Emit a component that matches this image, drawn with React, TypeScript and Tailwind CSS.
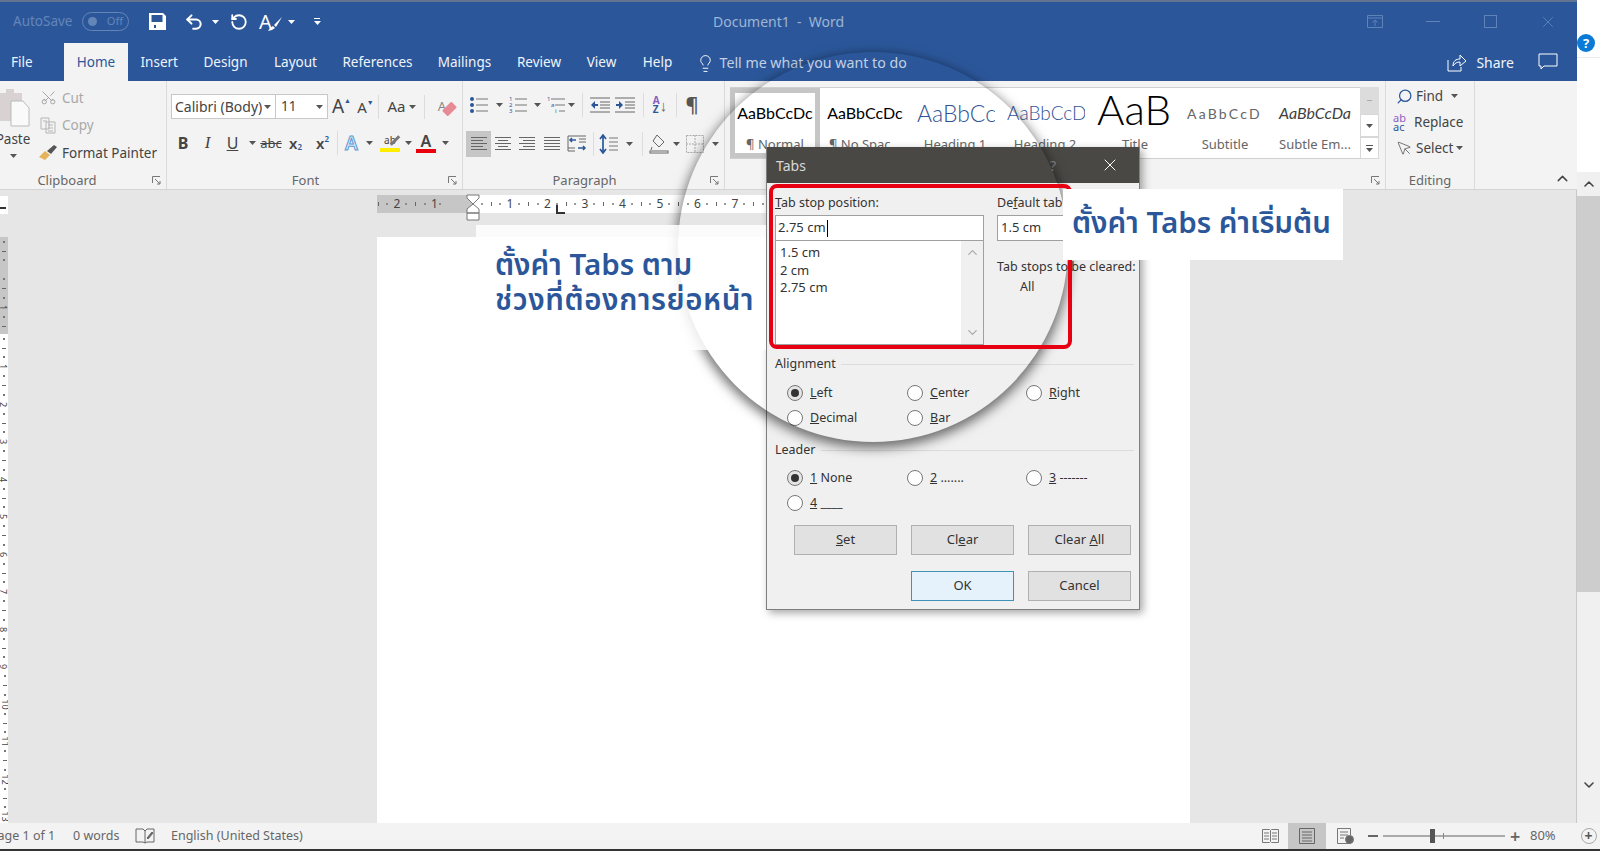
import { Undo2, RotateCcw, Scissors, Lightbulb, Search, MousePointer, ChevronUp, ChevronDown, X } from "lucide-react";
import type { ReactNode } from "react";

const ui = "font-['Noto_Sans',sans-serif]";

function Cell({ className = "", children }: { className?: string; children?: ReactNode }) {
  return <div className={`flex shrink-0 items-center justify-center ${className}`}>{children}</div>;
}

function Caret({ className = "text-[#555]" }: { className?: string }) {
  return (
    <svg width="7" height="4" viewBox="0 0 7 4" className={className}>
      <path d="M0 0h7L3.5 4z" fill="currentColor" />
    </svg>
  );
}

function Launcher() {
  return (
    <svg width="9" height="9" viewBox="0 0 9 9" fill="none" stroke="#777">
      <path d="M.5 7V.5H8" />
      <path d="M3 3l5 5M8 5v3H5" />
    </svg>
  );
}

function Sep() {
  return <div className="h-[24px] w-px shrink-0 bg-[#dcdcdc]" />;
}

// rows of [x1, x2] in a 20 wide box
function Lines({ rows, color = "#666" }: { rows: number[][]; color?: string }) {
  return (
    <svg width="20" height="20" viewBox="0 0 20 20" stroke={color} strokeWidth="1">
      {rows.map(([a, b], i) => (
        <line key={i} x1={a} x2={b} y1={3.5 + i * 3} y2={3.5 + i * 3} />
      ))}
    </svg>
  );
}

function Bullets() {
  return (
    <svg width="20" height="18" viewBox="0 0 20 18">
      {[3, 9, 15].map((y) => (
        <g key={y}>
          <circle cx="3" cy={y} r="2" fill="#2b579a" />
          <line x1="7" x2="19" y1={y} y2={y} stroke="#777" />
        </g>
      ))}
    </svg>
  );
}

function Numbered({ small }: { small?: boolean }) {
  return (
    <svg width="20" height="18" viewBox="0 0 20 18" fontSize="6" fill="#2b579a" fontFamily="Noto Sans">
      <text x="1" y="5">1</text>
      <text x={small ? 5 : 1} y="11">{small ? "a" : "2"}</text>
      <text x={small ? 9 : 1} y="17">{small ? "i" : "3"}</text>
      <line x1={small ? 5 : 7} x2="19" y1="3" y2="3" stroke="#777" />
      <line x1={small ? 9 : 7} x2="19" y1="9" y2="9" stroke="#777" />
      <line x1={small ? 13 : 7} x2="19" y1="15" y2="15" stroke="#777" />
    </svg>
  );
}

function Indent({ right }: { right?: boolean }) {
  return (
    <svg width="20" height="18" viewBox="0 0 20 18">
      {[2, 16].map((y) => (
        <line key={y} x1="0" x2="20" y1={y} y2={y} stroke="#666" />
      ))}
      {[6, 9, 12].map((y) => (
        <line key={y} x1="10" x2="20" y1={y} y2={y} stroke="#666" />
      ))}
      <path d={right ? "M1 8h3V5l4 4-4 4v-3H1z" : "M8 8H5V5L1 9l4 4v-3h3z"} fill="#2b579a" />
    </svg>
  );
}

function Tick({ h = 3 }: { h?: number }) {
  return h === 3 ? <span className="h-[4px] w-px bg-[#666]" /> : <span className="h-[2px] w-[2px] rounded-full bg-[#777]" />;
}

function RulerUnit({ n, className = "" }: { n: string; className?: string }) {
  return (
    <div className={`grid h-full w-[37.5px] shrink-0 grid-cols-4 items-center justify-items-center ${className}`}>
      <Tick h={1} />
      <Tick />
      <Tick h={1} />
      <span className="text-[12px] leading-none text-[#444]">{n}</span>
    </div>
  );
}

function VRulerUnit({ n }: { n: string }) {
  return (
    <div className="grid h-[37.5px] shrink-0 grid-rows-4 items-center justify-items-center">
      <span className="h-[2px] w-[2px] bg-[#777]" />
      <span className="h-px w-[4px] bg-[#666]" />
      <span className="h-[2px] w-[2px] bg-[#777]" />
      <span className="rotate-90 text-[9px] leading-none text-[#444]">{n}</span>
    </div>
  );
}

function Style({ sample, label, className, selected }: { sample: string; label: string; className: string; selected?: boolean }) {
  return (
    <div className={`flex w-[90px] shrink-0 flex-col items-center overflow-hidden ${selected ? "border-[5px] border-[#c6c6c6]" : "border-[5px] border-white"}`}>
      <div className={`flex h-[40px] w-full items-center overflow-hidden whitespace-nowrap font-['Lato',sans-serif] ${className}`}>{sample}</div>
      <div className="whitespace-nowrap pt-[2px] text-[13px] leading-[18px] text-[#666]">{label}</div>
    </div>
  );
}

function Radio({ label, checked }: { label: ReactNode; checked?: boolean }) {
  return (
    <div className="flex items-center gap-[7px] text-[12.5px] leading-none text-[#333]">
      <span className={`flex h-[16px] w-[16px] shrink-0 items-center justify-center rounded-full border border-[#777] ${checked ? "bg-[#e4e4e4]" : "bg-white"}`}>
        {checked && <span className="h-[8px] w-[8px] rounded-full bg-[#333]" />}
      </span>
      <span className="whitespace-nowrap">{label}</span>
    </div>
  );
}

function DialogBtn({ children, primary, className = "" }: { children: ReactNode; primary?: boolean; className?: string }) {
  return (
    <div className={`flex h-[30px] w-[103px] items-center justify-center border text-[13px] text-[#333] ${primary ? "border-[#3f93b8] bg-[#e5f1fb]" : "border-[#b0b0b0] bg-[#e1e1e1]"} ${className}`}>
      <span className="whitespace-pre">{children}</span>
    </div>
  );
}

function Group({ label, launcher, labelClass = "", className, children }: { label?: string; launcher?: boolean; labelClass?: string; className: string; children: ReactNode }) {
  return (
    <div className={`flex h-full shrink-0 flex-col border-r border-[#dadada] ${className}`}>
      <div className="h-[90px] overflow-visible">{children}</div>
      <div className="grid h-[18px] grid-cols-[1fr_auto_1fr] items-center text-[13px] text-[#666]">
        <span />
        <span className={labelClass}>{label}</span>
        <span className="flex justify-end pr-[5px]">{launcher && <Launcher />}</span>
      </div>
    </div>
  );
}

const TABS = [
  { t: "Insert", w: "w-[62.5px]" },
  { t: "Design", w: "w-[70px]" },
  { t: "Layout", w: "w-[70px]" },
  { t: "References", w: "w-[94px]" },
  { t: "Mailings", w: "w-[80px]" },
  { t: "Review", w: "w-[69px]" },
  { t: "View", w: "w-[56px]" },
  { t: "Help", w: "w-[56px]" },
];

const VRULER = ["", "1", "", "1", "2", "3", "4", "5", "6", "7", "8", "9", "10", "11", "12", "13"];

export default function App() {
  return (
    <div className={`relative flex h-[851px] w-[1600px] flex-col overflow-hidden bg-white text-[#444] ${ui}`}>
      <div className="flex min-h-0 flex-1">
        <div className="flex w-[1577px] shrink-0 flex-col">
          {/* title bar */}
          <div className="h-[2px] bg-[#62748f]" />
          <div className="flex h-[39px] items-center bg-[#2b579a] pl-[13px] text-white">
            <span className="w-[63px] text-[13.5px] text-[#6485b8]">AutoSave</span>
            <div className="ml-[6px] flex h-[19px] w-[47px] items-center justify-between rounded-full border border-[#6485b8] px-[5px] text-[11px] text-[#6485b8]">
              <span className="h-[9px] w-[9px] rounded-full bg-[#6485b8]" />
              <span>Off</span>
            </div>
            <svg className="ml-[20px]" width="17" height="17" viewBox="0 0 17 17" fill="#fff">
              <path fillRule="evenodd" d="M0 0h14l3 3v14H0zM2.5 2v7h11V2zM5 12v3h2v-3z" />
            </svg>
            <Undo2 className="ml-[18px]" size={20} strokeWidth={2.4} />
            <Cell className="ml-[7px] w-[8px]"><Caret className="text-white" /></Cell>
            <RotateCcw className="ml-[11px]" size={18} strokeWidth={2.4} />
            <div className="relative ml-[11px] flex h-[24px] w-[24px] items-center text-[20px] leading-none text-white">
              A
              <svg className="absolute left-[9px] top-[7px]" width="15" height="15" viewBox="0 0 15 15" fill="#fff">
                <path d="M14 0L6 8l2 2zM5 9l-3 2-2 3 4-1 3-2z" />
              </svg>
            </div>
            <Cell className="ml-[4px] w-[8px]"><Caret className="text-white" /></Cell>
            <div className="ml-[17px] flex w-[10px] flex-col items-center gap-[2px]">
              <span className="h-px w-[6px] bg-white" />
              <Caret className="text-white" />
            </div>
            <span className="ml-[391px] whitespace-nowrap text-[14px] text-[#9fb4d4]">Document1&nbsp; -&nbsp; Word</span>
            <div className="ml-auto flex text-[#5f82b8]">
              <Cell className="w-[57.75px]">
                <svg width="16" height="13" viewBox="0 0 16 13" fill="none" stroke="currentColor"><path d="M.5.5h15v12H.5zM.5 3h15M8 11V5M5.5 7.5L8 5l2.5 2.5" /></svg>
              </Cell>
              <Cell className="w-[57.75px]"><span className="h-px w-[14px] bg-current" /></Cell>
              <Cell className="w-[57.75px]"><span className="h-[13px] w-[13px] border border-current" /></Cell>
              <Cell className="w-[57.75px]"><X size={18} strokeWidth={1.2} /></Cell>
            </div>
          </div>

          {/* tabs */}
          <div className="flex h-[40px] items-end bg-[#2b579a] text-[13.5px] text-[#f0f4fa]">
            <div className="flex h-[38px] w-[64px] items-center pl-[11px]">File</div>
            <div className="flex h-[38px] w-[64px] items-center justify-center bg-[#f3f3f3] text-[#2b579a]">Home</div>
            {TABS.map((tab) => (
              <div key={tab.t} className={`flex h-[38px] items-center justify-center ${tab.w}`}>{tab.t}</div>
            ))}
            <div className="flex h-[38px] items-center pl-[10px] pt-[2px] text-[#c3d0e4]">
              <Lightbulb size={19} strokeWidth={1.2} className="text-white" />
              <span className="ml-[5px] whitespace-nowrap text-[14.2px]">Tell me what you want to do</span>
            </div>
            <div className="ml-auto flex h-[38px] items-center pr-[19px]">
              <svg width="20" height="19" viewBox="0 0 20 19" fill="none" stroke="#fff">
                <path d="M1 7v11h13v-4M6 13c0-5 3-7 7-7V2l6 6-6 5V9c-3 0-5 1-7 4z" />
              </svg>
              <span className="ml-[9px] text-[14px]">Share</span>
              <svg className="ml-[24px]" width="20" height="18" viewBox="0 0 20 18" fill="none" stroke="#fff">
                <path d="M1 1h18v12H6l-3 3v-3H1z" />
              </svg>
            </div>
          </div>

          {/* ribbon */}
          <div className="flex h-[109px] shrink-0 border-b border-[#d4d4d4] bg-[#f3f3f3]">
            <Group label="Clipboard" labelClass="mr-[32px]" launcher className="w-[167px]">
              <div className="flex h-full">
                <div className="flex w-[26px] flex-col items-center pt-[8px]">
                  <svg className="shrink-0" width="34" height="38" viewBox="0 0 34 38">
                    <path d="M0 4h10V0h8v4h8v28H0z" fill="#d8d2d2" />
                    <path d="M15 12h12l6 7v18H15z" fill="#fafafa" stroke="#bbb" />
                  </svg>
                  <span className="mt-[3px] text-[13.5px] leading-[18px]">Paste</span>
                  <Cell className="mt-[4px] h-[8px]"><Caret /></Cell>
                </div>
                <div className="ml-[12px] flex flex-col pt-[3px] text-[13.5px]">
                  <div className="flex h-[27.5px] items-center text-[#a9a9a9]">
                    <Cell className="w-[20px]"><Scissors size={17} strokeWidth={1.2} className="-rotate-90 text-[#999]" /></Cell>
                    <span className="ml-[4px]">Cut</span>
                  </div>
                  <div className="flex h-[27.5px] items-center text-[#a9a9a9]">
                    <Cell className="w-[20px]">
                      <svg width="16" height="17" viewBox="0 0 16 17" fill="none" stroke="#b5b5b5"><path d="M1 1h8v11H1zM6 5h9v11H6zM3 4h4M8 8h5M8 11h5M8 14h5" /></svg>
                    </Cell>
                    <span className="ml-[4px]">Copy</span>
                  </div>
                  <div className="flex h-[27.5px] items-center text-[#444]">
                    <Cell className="w-[20px]">
                      <svg width="18" height="16" viewBox="0 0 18 16"><path d="M0 12l6-6 5 4-5 5z" fill="#e4b45c" /><path d="M8 6l7-6 3 2-6 7z" fill="#555" /></svg>
                    </Cell>
                    <span className="ml-[4px] whitespace-nowrap">Format Painter</span>
                  </div>
                </div>
              </div>
            </Group>

            <Group label="Font" labelClass="mr-[18px]" launcher className="w-[296px]">
              <div className="pl-[4px] pt-[13px]">
                <div className="flex h-[25px] items-center">
                  <div className="flex h-[25px] w-[105px] items-center justify-between border border-[#c8c8c8] bg-white pl-[3px] pr-[4px] text-[14px]">
                    <span className="whitespace-nowrap">Calibri (Body)</span>
                    <Caret />
                  </div>
                  <div className="flex h-[25px] w-[52px] items-center justify-between border border-l-0 border-[#c8c8c8] bg-white pl-[5px] pr-[4px] text-[13.5px]">
                    <span>11</span>
                    <Caret />
                  </div>
                  <Cell className="w-[25px] pl-[2px] text-[19px]">A<span className="-mt-[10px] text-[7px] text-[#2b579a]">▲</span></Cell>
                  <Cell className="w-[25px] pt-[2px] text-[15px]">A<span className="-mt-[8px] text-[7px] text-[#2b579a]">▼</span></Cell>
                  <Sep />
                  <div className="flex w-[45px] items-center justify-center gap-[3px] text-[15px]">Aa<Caret /></div>
                  <Sep />
                  <Cell className="ml-[6px] w-[22px]">
                    <div className="relative text-[13px] leading-none text-[#888]">
                      A
                      <span className="absolute left-[5px] top-[5px] h-[8px] w-[13px] -rotate-45 rounded-[1px] bg-[#e88a94]" />
                    </div>
                  </Cell>
                </div>
                <div className="mt-[11px] flex h-[26px] items-center text-[#444]">
                  <Cell className="w-[24px] text-[16px] font-bold">B</Cell>
                  <Cell className="w-[25px] font-['Liberation_Serif',serif] text-[17px] italic">I</Cell>
                  <Cell className="w-[25px] text-[16px] underline">U</Cell>
                  <Cell className="w-[14px]"><Caret /></Cell>
                  <Cell className="w-[24px] text-[13px] leading-none line-through">abc</Cell>
                  <Cell className="w-[25px] text-[15px] font-semibold">x<span className="mt-[7px] text-[8px] text-[#2b579a]">2</span></Cell>
                  <Cell className="w-[29px] text-[15px] font-semibold">x<span className="-mt-[8px] text-[8px] text-[#2b579a]">2</span></Cell>
                  <Sep />
                  <Cell className="w-[27px] text-[19px] font-semibold text-[#dbe8f5] [-webkit-text-stroke:1px_#5b9bd5]">A</Cell>
                  <Cell className="w-[8px]"><Caret /></Cell>
                  <Cell className="ml-[5px] w-[24px]">
                    <div className="relative flex flex-col items-center">
                      <span className="text-[10px] leading-[13px]">ab</span>
                      <span className="mt-[1px] h-[4px] w-[20px] bg-[#ffee00]" />
                      <span className="absolute left-[9px] top-[5px] h-[3px] w-[12px] -rotate-45 bg-[#777]" />
                    </div>
                  </Cell>
                  <Cell className="w-[12px]"><Caret /></Cell>
                  <Cell className="w-[24px]">
                    <div className="flex flex-col items-center">
                      <span className="text-[16px] font-semibold leading-[16px]">A</span>
                      <span className="h-[4px] w-[20px] bg-[#e8000c]" />
                    </div>
                  </Cell>
                  <Cell className="w-[14px]"><Caret /></Cell>
                </div>
              </div>
            </Group>

            <Group label="Paragraph" labelClass="mr-[18px]" launcher className="w-[262px]">
              <div className="pl-[3px] pt-[11px]">
                <div className="flex h-[26px] items-center">
                  <Cell className="ml-[2px] w-[22px]"><Bullets /></Cell>
                  <Cell className="w-[18px]"><Caret /></Cell>
                  <Cell className="w-[20px]"><Numbered /></Cell>
                  <Cell className="w-[18px]"><Caret /></Cell>
                  <Cell className="w-[20px]"><Numbered small /></Cell>
                  <Cell className="w-[10px]"><Caret /></Cell>
                  <Cell className="w-[12px]"><Sep /></Cell>
                  <Cell className="w-[24px]"><Indent /></Cell>
                  <Cell className="w-[26px]"><Indent right /></Cell>
                  <Cell className="w-[10px]"><Sep /></Cell>
                  <Cell className="w-[24px]">
                    <div className="flex items-center">
                      <div className="flex flex-col text-[10px] font-bold leading-[9px] text-[#8a5fc0]"><span>A</span><span className="text-[#2b579a]">Z</span></div>
                      <span className="text-[15px] leading-none text-[#666]">↓</span>
                    </div>
                  </Cell>
                  <Cell className="w-[8px]"><Sep /></Cell>
                  <Cell className="w-[24px] text-[20px] font-semibold leading-none text-[#555]">¶</Cell>
                </div>
                <div className="mt-[13px] flex h-[26px] items-center">
                  <Cell className="h-[26px] w-[25px] bg-[#c6c6c6]"><Lines rows={[[2, 18], [2, 14], [2, 18], [2, 14], [2, 18]]} /></Cell>
                  <Cell className="w-[24px]"><Lines rows={[[2, 18], [5, 15], [2, 18], [5, 15], [2, 18]]} /></Cell>
                  <Cell className="w-[24px]"><Lines rows={[[2, 18], [6, 18], [2, 18], [6, 18], [2, 18]]} /></Cell>
                  <Cell className="w-[26px]"><Lines rows={[[2, 18], [2, 18], [2, 18], [2, 18], [2, 18]]} /></Cell>
                  <Cell className="w-[24px]">
                    <svg width="20" height="20" viewBox="0 0 20 20" fill="none" stroke="#666"><path d="M1 2h18M12 5h7M12 8h7M1 14h7M1 17h7M1 2v15" /><path d="M9 6H3m2-2L3 6l2 2M11 14h7m-2-2l2 2-2 2" stroke="#2b579a" strokeWidth="1.5" /></svg>
                  </Cell>
                  <Cell className="w-[8px]"><Sep /></Cell>
                  <Cell className="w-[24px]">
                    <svg width="20" height="20" viewBox="0 0 20 20" fill="none"><path d="M10 4h9M10 8h9M10 12h9M10 16h9" stroke="#777" /><path d="M4 1v18M1 5l3-4 3 4M1 15l3 4 3-4" stroke="#2b579a" strokeWidth="1.7" /></svg>
                  </Cell>
                  <Cell className="w-[16px]"><Caret /></Cell>
                  <Cell className="w-[10px]"><Sep /></Cell>
                  <Cell className="w-[24px]">
                    <svg width="20" height="20" viewBox="0 0 20 20" fill="none" stroke="#666"><path d="M8 1l7 7-5 5-6-6zM3 13l-1 3" /><rect x="1" y="17" width="18" height="2" fill="#fafafa" /></svg>
                  </Cell>
                  <Cell className="w-[10px]"><Caret /></Cell>
                  <Cell className="ml-[3px] w-[22px]">
                    <svg width="18" height="18" viewBox="0 0 18 18" fill="none" stroke="#aaa" strokeDasharray="2 1"><path d="M.5.5h17v17H.5zM9 0v18M0 9h18" /></svg>
                  </Cell>
                  <Cell className="ml-[4px] w-[10px]"><Caret /></Cell>
                </div>
              </div>
            </Group>

            {/* styles gallery */}
            <Group launcher className="w-[661px]">
              <div className="flex pl-[5px] pt-[6px]">
                <div className="flex h-[72px] border-y border-[#d0d0d0] bg-white">
                  <Style sample="AaBbCcDc" label="¶ Normal" selected className="justify-center text-[16px] text-black" />
                  <Style sample="AaBbCcDc" label="¶ No Spac..." className="justify-center text-[16px] text-black" />
                  <Style sample="AaBbCcD" label="Heading 1" className="pl-[2px] text-[23px] font-light text-[#2f5496]" />
                  <Style sample="AaBbCcDd" label="Heading 2" className="pl-[2px] text-[19px] font-light text-[#2f5496]" />
                  <Style sample="AaB" label="Title" className="pl-[2px] pb-[7px] text-[42px] font-light text-black" />
                  <Style sample="AaBbCcD" label="Subtitle" className="pl-[2px] text-[14px] tracking-[2.2px] text-[#666]" />
                  <Style sample="AaBbCcDa" label="Subtle Em..." className="justify-center text-[16px] italic text-[#404040]" />
                </div>
                <div className="flex h-[72px] w-[19px] flex-col">
                  <Cell className="h-[27px] bg-[#dcdcdc]"><span className="h-px w-[5px] bg-[#aaa]" /></Cell>
                  <Cell className="h-[23px] border border-[#d8d8d8] bg-white"><Caret /></Cell>
                  <Cell className="h-[22px] flex-col gap-[2px] border border-[#d8d8d8] bg-white"><span className="h-px w-[7px] bg-[#555]" /><Caret /></Cell>
                </div>
              </div>
            </Group>

            <Group label="Editing" className="w-[89px]">
              <div className="pt-[2px] text-[13.5px]">
                <div className="flex h-[26px] items-center pl-[9px]">
                  <Cell className="w-[18px]"><Search size={17} strokeWidth={1.8} className="-scale-x-100 text-[#2b579a]" /></Cell>
                  <span className="ml-[3px]">Find</span>
                  <Cell className="ml-[8px]"><Caret /></Cell>
                </div>
                <div className="flex h-[26px] items-center pl-[7px]">
                  <div className="flex w-[20px] flex-col text-[11px] leading-[9px]"><span className="text-[#8a5fc0]">ab</span><span className="text-[#2b579a]">ac</span></div>
                  <span className="ml-[1px]">Replace</span>
                </div>
                <div className="flex h-[26px] items-center pl-[9px]">
                  <Cell className="w-[18px]"><MousePointer size={17} strokeWidth={1} /></Cell>
                  <span className="ml-[3px]">Select</span>
                  <Cell className="ml-[3px]"><Caret /></Cell>
                </div>
              </div>
            </Group>
            <div className="flex flex-1 items-end justify-end pb-[2px] pr-[6px]">
              <ChevronUp size={17} strokeWidth={2} />
            </div>
          </div>

          {/* document area */}
          <div className="flex min-h-0 flex-1 border-r border-[#c8c8c8] bg-[#e6e6e6]">
            <div className="flex w-[8px] shrink-0 flex-col overflow-hidden pt-[6px]">
              <div className="h-[18px] shrink-0 bg-white" />
              <div className="mt-[23px] h-[97px] shrink-0 overflow-hidden bg-[#c6c6c6]">
                {VRULER.slice(0, 3).map((n, i) => (
                  <VRulerUnit key={i} n={n} />
                ))}
              </div>
              <div className="min-h-0 flex-1 overflow-hidden bg-white">
                {VRULER.slice(3).map((n, i) => (
                  <VRulerUnit key={i} n={n} />
                ))}
              </div>
            </div>
            <div className="flex min-w-0 flex-1 flex-col pl-[369px] pt-[5px]">
              <div className="flex h-[18px] w-[800px]">
                <div className="flex h-full w-[96px] items-center overflow-hidden bg-[#c6c6c6]">
                  <RulerUnit n="2" className="-ml-[13px]" />
                  <RulerUnit n="1" />
                  <Tick h={1} />
                  <span className="ml-[6px]"><Tick /></span>
                  <span className="ml-[6px]"><Tick h={1} /></span>
                </div>
                <div className="flex h-full flex-1 items-center bg-white pl-[4px]">
                  {["1", "2", "3", "4", "5", "6", "7", "8"].map((n) => (
                    <RulerUnit key={n} n={n} />
                  ))}
                </div>
              </div>
              <div className="mt-[24px] min-h-0 w-[813px] flex-1 bg-white" />
            </div>
          </div>
        </div>

        {/* right strip */}
        <div className="flex w-[23px] shrink-0 flex-col bg-white">
          <div className="h-[172px] pt-[34px]">
            <div className="flex h-[18px] w-[18px] items-center justify-center rounded-full bg-[#0a7ad6] text-[13px] font-bold leading-none text-white">?</div>
            <div className="mt-[5px] h-px bg-[#ececec]" />
          </div>
          <div className="flex flex-1 flex-col bg-[#f0f0f0]">
            <Cell className="h-[24px]"><ChevronUp size={16} strokeWidth={2.4} /></Cell>
            <div className="h-[396px] bg-[#cdcdcd]" />
            <div className="flex-1" />
            <Cell className="h-[24px]"><ChevronDown size={16} strokeWidth={2.4} /></Cell>
            <div className="h-[26px]" />
          </div>
        </div>
      </div>

      {/* status bar */}
      <div className="flex h-[26px] shrink-0 items-center bg-[#f3f3f3] text-[12.5px] text-[#666]">
        <span className="-ml-[10px] w-[83px] whitespace-nowrap">Page 1 of 1</span>
        <span className="w-[62px] whitespace-nowrap">0 words</span>
        <Cell className="w-[20px]">
          <svg width="20" height="16" viewBox="0 0 20 16" fill="none" stroke="#666"><path d="M1 1h7l2 2v12l-2-1H1zM10 3l2-2h7v13h-7l-2 1" /><path d="M12 10l5-6 1 1-5 6z" fill="#666" /></svg>
        </Cell>
        <span className="ml-[16px] whitespace-nowrap">English (United States)</span>
        <div className="ml-auto flex h-full items-center pr-[21px]">
          <Cell className="w-[17px]">
            <svg width="17" height="14" viewBox="0 0 17 14" fill="none" stroke="#777"><path d="M.5.5h7l1 1 1-1h7v13h-7l-1-1-1 1h-7zM8.5 1.5v11M2 4h5M2 7h5M2 10h5M10 4h5M10 7h5M10 10h5" /></svg>
          </Cell>
          <Cell className="ml-[9.5px] h-[26px] w-[38px] bg-[#c6c6c6]">
            <svg width="16" height="16" viewBox="0 0 16 16" fill="none" stroke="#666"><path d="M.5.5h15v15H.5zM3 4h10M3 7h10M3 10h10M3 13h10" /></svg>
          </Cell>
          <Cell className="ml-[9px] w-[20px]">
            <svg width="17" height="16" viewBox="0 0 17 16" fill="none" stroke="#777"><path d="M.5.5h13v15H.5zM3 4h8M3 7h8M3 10h4" /><circle cx="12.5" cy="11.5" r="4" fill="#666" /></svg>
          </Cell>
          <span className="ml-[13px] h-[2px] w-[10px] bg-[#666]" />
          <div className="ml-[5px] flex h-[2px] w-[122px] items-center bg-[#aaa] pl-[47px]">
            <span className="h-[14px] w-[5px] shrink-0 bg-[#555]" />
            <span className="ml-[8px] h-[6px] w-px shrink-0 bg-[#888]" />
          </div>
          <span className="ml-[5px] w-[10px] text-center text-[18px] font-semibold leading-none">+</span>
          <span className="ml-[10px] w-[26px] whitespace-nowrap text-[13px]">80%</span>
        </div>
        <Cell className="w-[23px]"><span className="flex h-[16px] w-[16px] items-center justify-center rounded-full border border-[#aaa] text-[14px] font-bold leading-none text-[#555]">+</span></Cell>
      </div>
      <div className="h-[2px] shrink-0 bg-[#333]" />

      {/* ruler markers over the ruler */}
      <svg className="absolute left-[464px] top-[194px]" width="18" height="27" viewBox="0 0 18 27" fill="#fff" stroke="#777">
        <path d="M3 1h12v3l-6 6-6-6zM3 15l6-5 6 5v4H3zM3 19h12v7H3z" />
      </svg>
      <svg className="absolute left-[556px] top-[205px]" width="9" height="9" viewBox="0 0 9 9" stroke="#333" strokeWidth="2" fill="none"><path d="M1 0v8h8" /></svg>
      <svg className="absolute left-0 top-[204px]" width="8" height="5"><path d="M0 4h6" stroke="#333" strokeWidth="2" /></svg>

      {/* Tabs dialog */}
      <div className="absolute left-[766px] top-[147px] flex h-[463px] w-[374px] flex-col border-x border-b border-[#7f7f7f] bg-[#f0f0f0] text-[12.5px] text-[#333] shadow-[3px_3px_8px_rgba(0,0,0,0.35)]">
        <div className="flex h-[36px] shrink-0 items-center justify-between bg-[#4a4845] pl-[9px] pr-[19px] text-[14px] text-[#d8d8d8]">
          <span>Tabs</span>
          <div className="flex items-center gap-[44px]">
            <span className="text-[14px] text-[#8b8985]">?</span>
            <X size={20} strokeWidth={1.2} className="text-white" />
          </div>
        </div>
        <div className="flex flex-col pl-[8px]">
          <div className="grid grid-cols-[209px_auto] gap-x-[13px] pt-[10px]">
            <div>
              <div className="mb-[2px] h-[20px] leading-[20px]"><u>T</u>ab stop position:</div>
              <div className="flex h-[26px] items-center border border-[#a0a0a0] bg-white pl-[2px] text-[13px]">2.75 cm<span className="ml-px h-[17px] w-px bg-black" /></div>
              <div className="flex h-[104px] border-x border-b border-[#a0a0a0] bg-white">
                <div className="flex-1 pl-[4px] pt-[3px] text-[13px] leading-[17.5px]">
                  <div>1.5 cm</div>
                  <div>2 cm</div>
                  <div>2.75 cm</div>
                </div>
                <div className="flex w-[22px] flex-col items-center justify-between bg-[#f0f0f0] py-[4px] text-[#aaa]">
                  <ChevronUp size={15} />
                  <ChevronDown size={15} />
                </div>
              </div>
            </div>
            <div>
              <div className="mb-[2px] h-[20px] whitespace-nowrap leading-[20px]">De<u>f</u>ault tab stops:</div>
              <div className="flex h-[26px] w-[134px] items-center border border-[#a0a0a0] bg-white pl-[3px] text-[13px]">1.5 cm</div>
              <div className="mt-[16px] h-[20px] whitespace-nowrap leading-[20px]">Tab stops to be cleared:</div>
              <div className="ml-[23px] h-[20px] leading-[20px]">All</div>
            </div>
          </div>

          <div className="mt-[9px] flex h-[20px] items-center gap-[5px]">
            <span>Alignment</span>
            <span className="mr-[5px] h-px flex-1 bg-[#dcdcdc]" />
          </div>
          <div className="mt-[6px] grid grid-cols-[120px_119px_1fr] pl-[12px] [grid-auto-rows:25.5px]">
            <Radio checked label={<><u>L</u>eft</>} />
            <Radio label={<><u>C</u>enter</>} />
            <Radio label={<><u>R</u>ight</>} />
            <Radio label={<><u>D</u>ecimal</>} />
            <Radio label={<><u>B</u>ar</>} />
          </div>

          <div className="mt-[9px] flex h-[20px] items-center gap-[5px]">
            <span>Leader</span>
            <span className="mr-[5px] h-px flex-1 bg-[#dcdcdc]" />
          </div>
          <div className="mt-[5px] grid grid-cols-[120px_119px_1fr] pl-[12px] [grid-auto-rows:25.5px]">
            <Radio checked label={<><u>1</u> None</>} />
            <Radio label={<><u>2</u> .......</>} />
            <Radio label={<><u>3</u> -------</>} />
            <Radio label={<><u>4</u> ____</>} />
          </div>

          <div className="mt-[9px] grid grid-cols-[103px_103px_103px] gap-x-[14px] gap-y-[16px] pl-[19px]">
            <DialogBtn><u>S</u>et</DialogBtn>
            <DialogBtn>Cl<u>e</u>ar</DialogBtn>
            <DialogBtn>Clear <u>A</u>ll</DialogBtn>
            <DialogBtn primary className="col-start-2">OK</DialogBtn>
            <DialogBtn>Cancel</DialogBtn>
          </div>
        </div>
      </div>

      {/* magnifier ring: only its shadow shows */}
      <div className="pointer-events-none absolute left-[678px] top-[52px] h-[390px] w-[390px] rounded-full shadow-[0_4px_12px_2px_rgba(0,0,0,0.55)]" />

      {/* red highlight */}
      <div className="absolute left-[769px] top-[184px] h-[165px] w-[303px] rounded-[8px] border-[4px] border-[#e60012]" />

      {/* callouts */}
      <div className="absolute left-[476px] top-[225px] h-[125px] w-[290px] bg-white/85 pl-[19px] pt-[24px] font-['Noto_Sans_Thai','Noto_Sans',sans-serif] text-[29.5px] font-semibold leading-[35px] text-[#2b579a]">
        <div className="whitespace-nowrap">ตั้งค่า Tabs ตาม</div>
        <div className="whitespace-nowrap tracking-[0.6px]">ช่วงที่ต้องการย่อหน้า</div>
      </div>
      <div className="absolute left-[1063px] top-[189px] flex h-[71px] w-[280px] items-center whitespace-nowrap bg-white pl-[9px] font-['Noto_Sans_Thai','Noto_Sans',sans-serif] text-[29.5px] font-semibold text-[#2b579a]">
        ตั้งค่า Tabs ค่าเริ่มต้น
      </div>
    </div>
  );
}
